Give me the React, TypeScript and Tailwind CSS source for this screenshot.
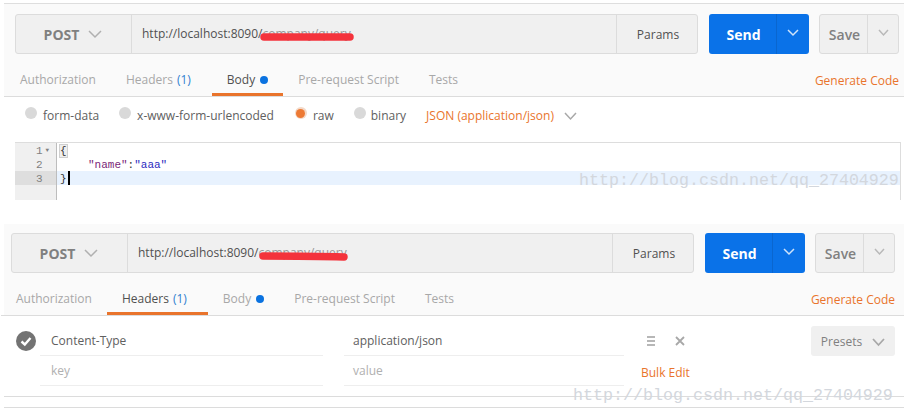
import React from "react";

const Chevron = ({ className = "", color = "#a0a0a0", w = 13, h = 7, sw = 1.5 }: { className?: string; color?: string; w?: number; h?: number; sw?: number }) => (
  <svg width={w} height={h + 2} viewBox={`0 0 ${w} ${h + 2}`} className={className} fill="none">
    <polyline points={`1,1 ${w / 2},${h} ${w - 1},1`} stroke={color} strokeWidth={sw} />
  </svg>
);

const Tab = ({ active, children, className = "" }: { active?: boolean; children: React.ReactNode; className?: string }) => (
  <div className={`h-[42px] pl-[15px] pr-[15px] flex items-center text-[12px] border-b-[3px] pt-[12px] ${active ? "border-[#e9742c] text-[#505050]" : "border-transparent text-[#a8a8a8]"} ${className}`}>
    {children}
  </div>
);

const Dot = () => <span className="ml-[5px] w-[8px] h-[8px] rounded-full bg-[#0a72e0] inline-block" />;

const Bar = ({ path }: { path: string }) => (
  <div className="flex h-[40px]">
    <div className="flex flex-1 rounded-[3px] border border-[#dcdcdc] bg-[#f0f0f0]">
      <div className="w-[116px] shrink-0 border-r border-[#dcdcdc] flex items-center justify-center gap-[9px] pr-[1px]">
        <span className="text-[14px] font-bold text-[#808080]">POST</span>
        <Chevron w={14} h={7} color="#b0b0b0" />
      </div>
      <div className="flex-1 flex items-center pl-[10px] text-[12px] text-[#505050]">http://localhost:8090/<span className="text-[#999999]">{path}</span></div>
      <div className="w-[81px] shrink-0 border-l border-[#dcdcdc] flex items-center justify-center text-[12px] text-[#505050] pl-[2px] pt-[1px]">Params</div>
    </div>
    <div className="ml-[11px] w-[100px] flex rounded-[3px] bg-[#0a72e8]">
      <div className="w-[68px] flex items-center justify-center text-[14px] font-bold text-white border-r border-[#0a66cf] pl-[2px]">Send</div>
      <div className="flex-1 flex items-center justify-center pb-[3px]"><Chevron w={12} h={6} color="#cfe3fa" /></div>
    </div>
    <div className="ml-[10px] w-[80px] flex rounded-[3px] border border-[#dcdcdc] bg-[#f0f0f0]">
      <div className="w-[48px] flex items-center justify-center text-[14px] font-semibold text-[#808080] border-r border-[#dcdcdc] pl-[2px]">Save</div>
      <div className="flex-1 flex items-center justify-center pb-[3px]"><Chevron w={11} h={6} color="#b8b8b8" /></div>
    </div>
  </div>
);

const Radio = ({ on, className = "" }: { on?: boolean; className?: string }) => (
  <span className={`w-[12px] h-[12px] shrink-0 rounded-full -translate-y-[3px] flex items-center justify-center ${on ? "bg-[#f3d9c8]" : "bg-[#d9d9d9]"} ${className}`}>
    {on && <span className="w-[9px] h-[9px] rounded-full bg-[#ed7a35]" />}
  </span>
);

const Scribble = ({ className, d }: { className: string; d: string }) => (
  <svg className={`absolute ${className}`} width="110" height="14" viewBox="0 0 110 14" fill="none">
    <path d={d} stroke="#f4333c" strokeWidth="7.5" strokeLinecap="round" />
  </svg>
);

const Watermark = ({ className }: { className: string }) => (
  <div className={`absolute text-[16.67px] leading-none text-[#d3d7dd] whitespace-nowrap ${className}`} style={{ fontFamily: '"Liberation Mono", monospace' }}>
    http://blog.csdn.net/qq_27404929
  </div>
);

export default function App() {
  return (
    <div className="relative w-[904px] h-[412px] overflow-hidden bg-white" style={{ fontFamily: '"Open Sans", sans-serif' }}>
      {/* Panel 1 */}
      <div className="h-[224px] pt-[3px] pl-[4px]">
        <div className="border-t border-[#dedede] bg-[#fafafa] h-[94px] pt-[10px]">
          <div className="pl-[11px] pr-[5px]"><Bar path="company/query" /></div>
          <div className="flex items-start border-b border-[#dcdcdc] h-[43px] pl-[1px] pr-[5px]">
            <Tab>Authorization</Tab>
            <Tab className="pr-[21px]">Headers <span className="ml-[4px] text-[#2f80d0]">(1)</span></Tab>
            <Tab active>Body<Dot /></Tab>
            <Tab>Pre-request Script</Tab>
            <Tab>Tests</Tab>
            <div className="ml-auto pt-[18px] text-[12px] text-[#e9742c]">Generate Code</div>
          </div>
        </div>
        <div className="flex items-center h-[45px] pl-[21px] text-[12px] text-[#606060] pb-[7px]">
          <Radio /><span className="ml-[6px]">form-data</span>
          <Radio className="ml-[20px]" /><span className="ml-[6px]">x-www-form-urlencoded</span>
          <Radio on className="ml-[21px]" /><span className="ml-[6px]">raw</span>
          <Radio className="ml-[20px]" /><span className="ml-[5px]">binary</span>
          <span className="ml-[20px] text-[#e9742c]">JSON (application/json)</span>
          <Chevron className="ml-[10px]" w={13} h={7} color="#a8a8a8" />
        </div>
        <div className="ml-[11px] w-[886px] h-[58px] flex border-t border-r border-[#dddddd] text-[11px] leading-[16px]" style={{ fontFamily: '"Liberation Mono", monospace' }}>
          <div className="w-[42px] shrink-0 bg-[#f0f0f0] border-r border-[#bdbdbd] text-[#808080]">
            <div className="h-[14px] pl-[21px] pt-[1px] flex items-center">1<span className="ml-[3px] text-[6px] leading-none">▼</span></div>
            <div className="h-[14px] pl-[21px]">2</div>
            <div className="h-[14px] pl-[21px] bg-[#dedede]">3</div>
          </div>
          <div className="flex-1 text-[#333]">
            <div className="h-[14px] pl-[3px]"><span className="bg-[#eeeeee] outline outline-1 outline-[#d0d0d0]">{"{"}</span></div>
            <div className="h-[14px] pl-[31px]"><span className="text-[#7a1f78]">"name"</span>:<span className="text-[#2b2bc0]">"aaa"</span></div>
            <div className="h-[14px] pl-[3px] pt-[1px] bg-[#e8f2fe] flex items-center">{"}"}<span className="w-[2px] h-[14px] bg-black ml-[1px] -mt-[1px]" /></div>
          </div>
        </div>
      </div>

      {/* Panel 2 */}
      <div className="h-[188px] pl-[4px]">
        <div className="bg-[#fafafa] h-[92px] pt-[9px]">
          <div className="pl-[7px] pr-[9px]"><Bar path="company/query" /></div>
          <div className="flex items-start border-b border-[#dcdcdc] h-[43px] pr-[9px] -ml-[3px]">
            <Tab>Authorization</Tab>
            <Tab active className="pr-[21px]">Headers <span className="ml-[4px] text-[#2f80d0]">(1)</span></Tab>
            <Tab>Body<Dot /></Tab>
            <Tab>Pre-request Script</Tab>
            <Tab>Tests</Tab>
            <div className="ml-auto pt-[18px] text-[12px] text-[#e9742c]">Generate Code</div>
          </div>
        </div>
        <div className="flex h-[81px] border-b border-[#dcdcdc] pr-[9px]">
          <div className="w-[36px] shrink-0 pl-[12px] pt-[15px]">
            <svg width="20" height="20" viewBox="0 0 20 20"><circle cx="10" cy="10" r="10" fill="#737373" /><polyline points="5.5,10.5 8.8,13.5 14.5,7" fill="none" stroke="#fff" strokeWidth="2.4" /></svg>
          </div>
          <div className="w-[283px] shrink-0 text-[12px]">
            <div className="h-[40px] pt-[16px] pl-[11px] border-b border-[#eeeeee] text-[#606060]">Content-Type</div>
            <div className="h-[30px] pt-[6px] pl-[11px] border-b border-[#eeeeee] text-[#b0b0b0]">key</div>
          </div>
          <div className="ml-[21px] w-[280px] shrink-0 text-[12px]">
            <div className="h-[40px] pt-[16px] pl-[9px] border-b border-[#eeeeee] text-[#606060]">application/json</div>
            <div className="h-[30px] pt-[6px] pl-[9px] border-b border-[#eeeeee] text-[#b0b0b0]">value</div>
          </div>
          <div className="ml-[17px] w-[70px] shrink-0">
            <div className="h-[40px] flex items-center gap-[20px] pt-[10px] pl-[6px]">
              <svg width="8" height="10" viewBox="0 0 8 10"><path d="M0 1h8M0 5h8M0 9h8" stroke="#a0a0a0" strokeWidth="1.5" /></svg>
              <svg width="10" height="10" viewBox="0 0 10 10"><path d="M1 1l8 8M9 1l-8 8" stroke="#a8a8a8" strokeWidth="1.8" /></svg>
            </div>
            <div className="pt-[8px] text-[12px] text-[#e9742c] whitespace-nowrap">Bulk Edit</div>
          </div>
          <div className="ml-auto mt-[10px] w-[84px] h-[30px] rounded-[3px] bg-[#f0f0f0] flex items-center justify-center gap-[10px] text-[12px] text-[#808080] pt-[2px]">
            Presets <Chevron w={13} h={7} color="#a8a8a8" sw={1.8} />
          </div>
        </div>
        <div className="h-[11px] border-b border-[#dcdcdc]" />
      </div>

      <Scribble className="left-[255px] top-[30px]" d="M9 7 C 30 7, 70 7, 95 7" />
      <Scribble className="left-[254px] top-[249px]" d="M9 7 C 30 7, 60 7, 90 8" />
      <Watermark className="left-[579px] top-[173px]" />
      <Watermark className="left-[573px] top-[388px]" />
    </div>
  );
}
